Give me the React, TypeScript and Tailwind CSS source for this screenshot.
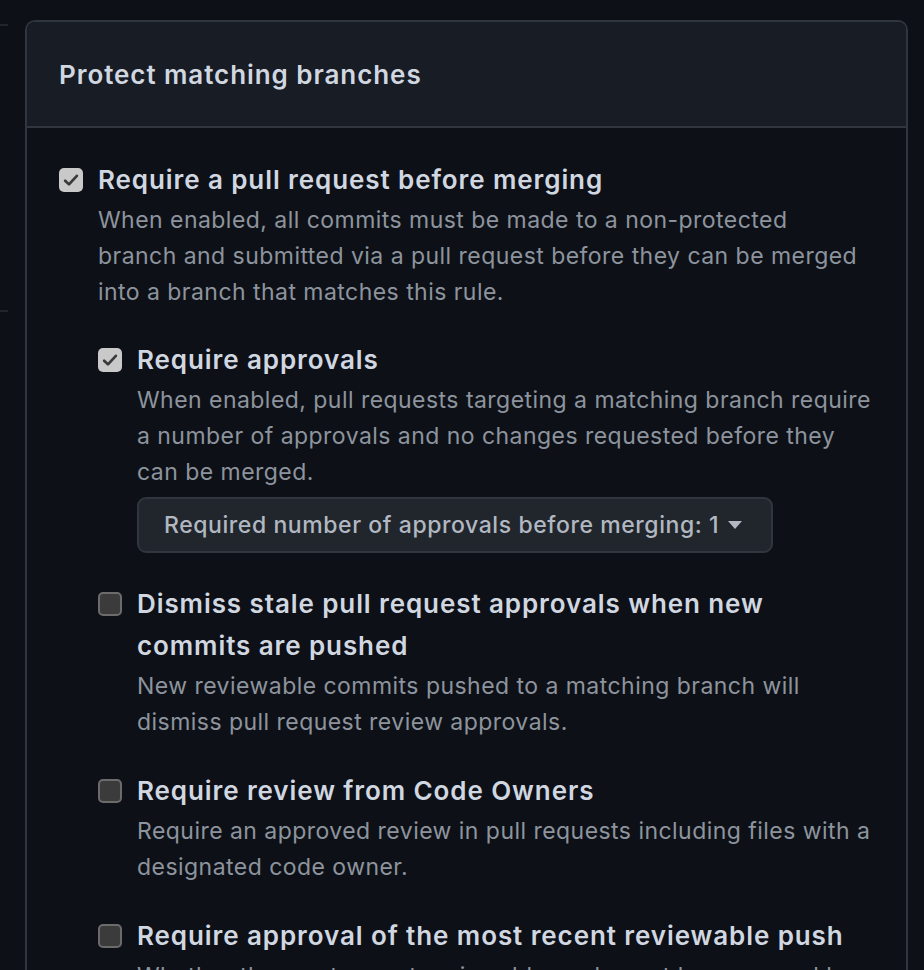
import React from 'react';

// --- ICONS ---
const CheckIcon = () => (
    <svg className="h-[18px] w-[18px]" viewBox="0 0 16 16" fill="none" stroke="currentColor" strokeWidth={2.4} strokeLinecap="round" strokeLinejoin="round">
        <path d="M2.8 8.6l3.4 3.3 7-7.6" />
    </svg>
);

const CaretIcon = () => (
    <svg className="h-[10px] w-4" viewBox="0 0 16 10" fill="currentColor">
        <path d="M1 1h14L8 9z" />
    </svg>
);

const Checkbox: React.FC<{ checked: boolean }> = ({ checked }) => (
    <span
        className={`mt-[9px] flex h-6 w-6 shrink-0 items-center justify-center rounded-[5px] ${
            checked ? 'bg-[#c9c9c9] text-[#3a3a3a]' : 'border-2 border-[#6b6b6b] bg-[#3b3b3b]'
        }`}
    >
        {checked && <CheckIcon />}
    </span>
);

interface RuleProps {
    title: React.ReactNode;
    description: React.ReactNode;
    checked?: boolean;
    children?: React.ReactNode;
}

const Rule: React.FC<RuleProps> = ({ title, description, checked = false, children }) => (
    <div className="flex gap-[15px]">
        <Checkbox checked={checked} />
        <div className="flex-1">
            <div className="text-[26px] font-semibold leading-[42px] tracking-[0.035em] text-[#d1d7e0]">{title}</div>
            <p className="mt-px text-[23px] leading-[36px] tracking-[0.02em] text-[#8d949e]">{description}</p>
            {children}
        </div>
    </div>
);

export default function App() {
    return (
        <div
            className="flex h-[970px] w-[924px] overflow-hidden bg-[#0d1117]"
            style={{ fontFamily: 'Inter, "Noto Sans", sans-serif' }}
        >
            {/* sidebar stub */}
            <div className="w-2 shrink-0">
                <div className="mt-6 h-[288px] border-y-2 border-[#21262d]" />
            </div>

            {/* panel */}
            <div className="ml-[17px] mt-5 w-[883px] shrink-0 rounded-t-[10px] border-2 border-b-0 border-[#30363d]">
                <div className="flex h-[106px] items-center rounded-t-[8px] border-b-2 border-[#30363d] bg-[#181c24] px-[32px]">
                    <h2 className="text-[26px] font-semibold tracking-[0.036em] text-[#d1d7e0]">Protect matching branches</h2>
                </div>

                <div className="flex flex-col gap-[29px] px-[32px] pt-[31px]">
                    <Rule
                        checked
                        title="Require a pull request before merging"
                        description={<>When enabled, all commits must be made to a non-protected<br />branch and submitted via a pull request before they can be merged<br />into a branch that matches this rule.</>}
                    >
                        <div className="mt-[29px] flex flex-col gap-[30px]">
                            <Rule
                                checked
                                title="Require approvals"
                                description={<>When enabled, pull requests targeting a matching branch require<br />a number of approvals and no changes requested before they<br />can be merged.</>}
                            >
                                <button className="mt-[7px] flex h-[56px] items-center gap-2 rounded-[9px] border-2 border-[#30363d] bg-[#21262d] pl-[25px] pr-[28px] text-[23px] font-medium tracking-[0.025em] text-[#b1b8c1]">
                                    Required number of approvals before merging: 1
                                    <CaretIcon />
                                </button>
                            </Rule>
                            <Rule
                                title={<>Dismiss stale pull request approvals when new<br />commits are pushed</>}
                                description={<>New reviewable commits pushed to a matching branch will<br />dismiss pull request review approvals.</>}
                            />
                            <Rule
                                title="Require review from Code Owners"
                                description={<>Require an approved review in pull requests including files with a<br />designated code owner.</>}
                            />
                            <Rule
                                title="Require approval of the most recent reviewable push"
                                description={<>Whether the most recent reviewable push must be approved by<br />someone other than the person who pushed it.</>}
                            />
                        </div>
                    </Rule>
                </div>
            </div>
        </div>
    );
}
